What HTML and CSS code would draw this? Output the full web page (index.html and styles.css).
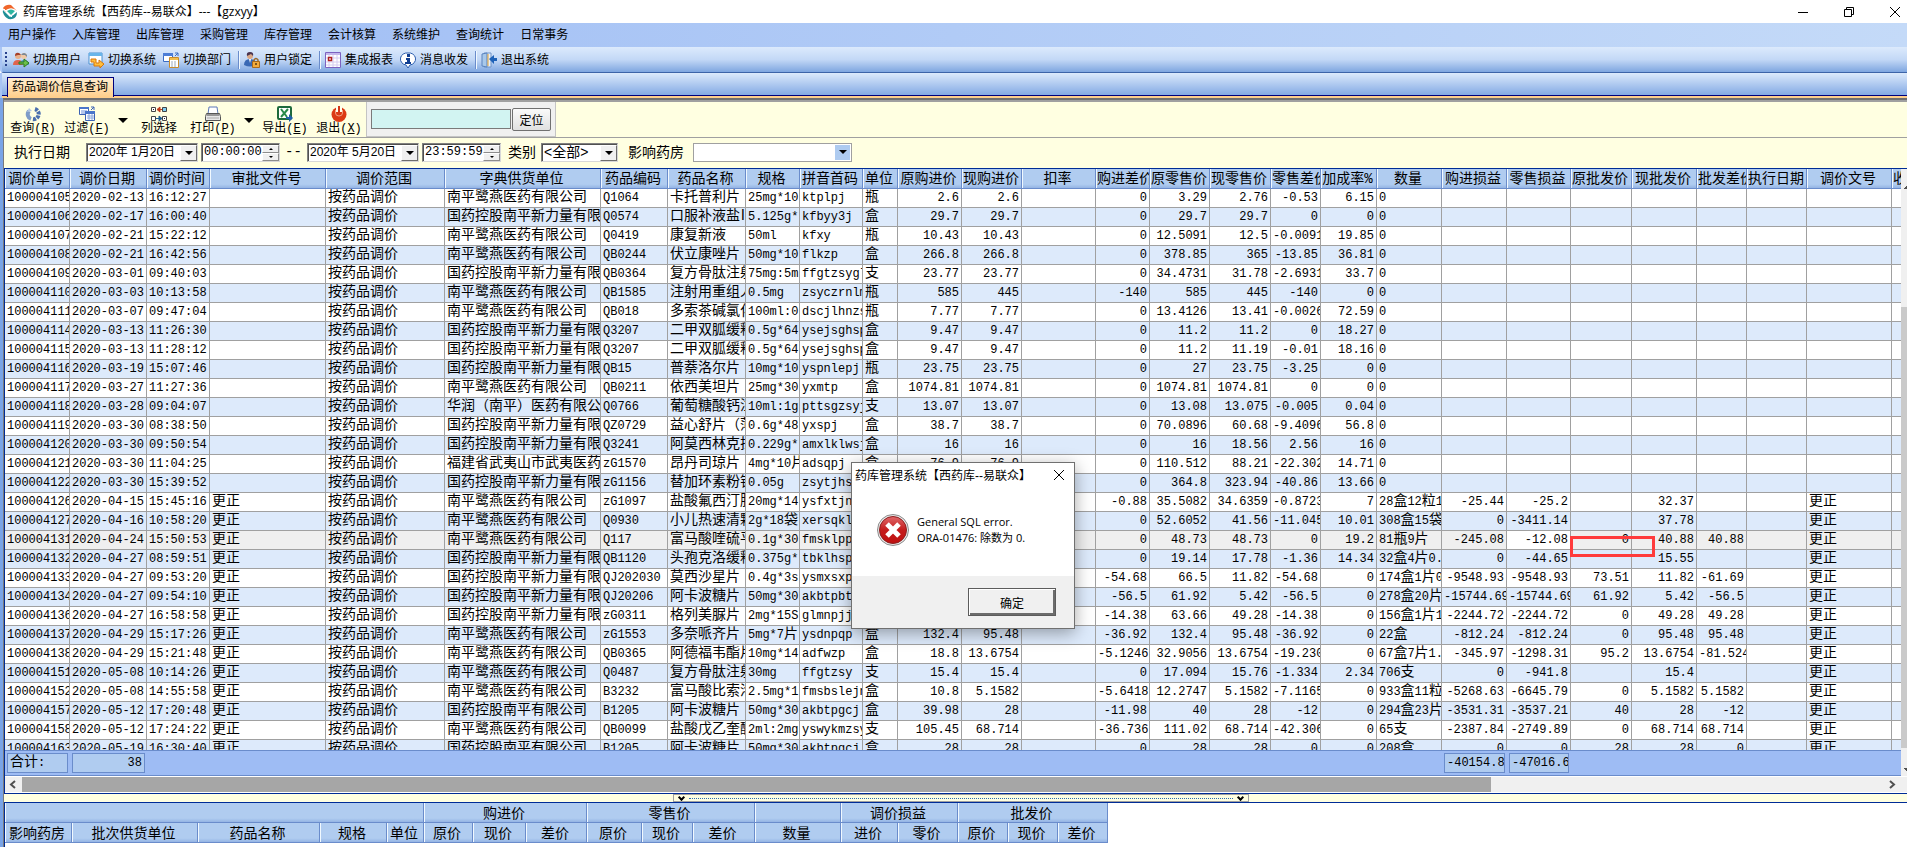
FILE: index.html
```html
<!DOCTYPE html>
<html lang="zh-CN">
<head>
    <meta charset="UTF-8">
    <meta name="viewport" content="width=device-width, initial-scale=1.0">
    <title>药库管理系统</title>
    <link rel="stylesheet" href="styles.css">
</head>
<body>
    <header class="title-bar">
        <svg class="app-icon" width="16" height="16" viewBox="0 0 16 16">
            <path d="M1 4 Q4 0 9 1 L15 7 Q11 3 6 5 Q3 6 4 8 Z" fill="#f0662b"/>
            <path d="M1 6 L8 13 Q12 11 15 8 Q15 14 10 15 Q5 16 2 11 Q0 8 1 6 Z" fill="#1f8f96"/>
            <path d="M5 7 Q9 4 13 7 L9 11 Z" fill="#2cb5a0"/>
            <path d="M2 5 L10 13" stroke="#fff" stroke-width="1"/>
        </svg>
        <span class="title-text">药库管理系统【西药库--易联众】---【gzxyy】</span>
        <div class="window-buttons">
            <button type="button" aria-label="最小化"><svg width="12" height="12" viewBox="0 0 12 12"><path d="M1 6.5h10" stroke="#000"/></svg></button>
            <button type="button" aria-label="还原"><svg width="12" height="12" viewBox="0 0 12 12" fill="none" stroke="#000"><path d="M1.5 3.5h7v7h-7z M3.500 3.500v-2h7v7h-2"/></svg></button>
            <button type="button" aria-label="关闭"><svg width="12" height="12" viewBox="0 0 12 12"><path d="M1 1L11 11M11 1L1 11" stroke="#000"/></svg></button>
        </div>
    </header>

    <nav class="menu-bar">
        <a href="#">用户操作</a>
        <a href="#">入库管理</a>
        <a href="#">出库管理</a>
        <a href="#">采购管理</a>
        <a href="#">库存管理</a>
        <a href="#">会计核算</a>
        <a href="#">系统维护</a>
        <a href="#">查询统计</a>
        <a href="#">日常事务</a>
    </nav>

    <div class="main-toolbar">
        <span class="grip"></span>
        <button type="button">
            <svg width="16" height="16" viewBox="0 0 16 16">
                <circle cx="5" cy="4" r="3" fill="#e8b08a"/><path d="M2 4q0-4 4-3l2 2-3 0z" fill="#a3402a"/>
                <circle cx="11" cy="4" r="3" fill="#f0c8a4"/><path d="M8 3q3-4 6 0v2l-2-2z" fill="#7a8896"/>
                <path d="M0 13q0-5 5-5t5 5z" fill="#e0644c"/><path d="M7 12q0-4 4-4 5 0 5 5z" fill="#4f9dc4"/>
                <path d="M6 10h5V7l5 4-5 4v-3H6z" fill="#6cc04a" stroke="#2c7a1e"/>
            </svg>切换用户</button>
        <button type="button">
            <svg width="16" height="16" viewBox="0 0 16 16">
                <path d="M1 1h13v11H1z" fill="#fff" stroke="#4a90d0"/><path d="M1 1h13v3H1z" fill="#69b5ea"/>
                <path d="M3 7h5v4h3V8l5 4-4 4v-2H6V10H3z" fill="#ffbe3c" stroke="#d8760e"/>
            </svg>切换系统</button>
        <button type="button">
            <svg width="16" height="16" viewBox="0 0 16 16">
                <path d="M.5 1.500h9v8h-9z" fill="#fff" stroke="#3b6cc4"/><path d="M0 1h10v3H0z" fill="#4c7dd6"/>
                <path d="M12 1h3v3M12 4l3-3" stroke="#3b6cc4" fill="none"/>
                <path d="M6.500 5.500h9v10h-9z" fill="#fff" stroke="#c88b2c"/><path d="M7 6h8v2H7z" fill="#f2bf4e"/>
                <path d="M8 10h6M8 12h6M8 14h6" stroke="#9aa8bc" stroke-dasharray="2 1"/>
            </svg>切换部门</button>
        <span class="split"></span>
        <button type="button">
            <svg width="16" height="16" viewBox="0 0 16 16">
                <circle cx="6" cy="4" r="3" fill="#dba987"/><path d="M3 4q-1-4 3-4 4 0 3 4L7 2z" fill="#4a3550"/>
                <path d="M0 13q0-6 6-6t6 6q-6 3-12 0z" fill="#3968b4"/><path d="M5 7l1 4 1-4z" fill="#fff"/>
                <path d="M10 10V8q2-3 4 0v2" fill="none" stroke="#9a6a2c" stroke-width="1.500"/>
                <path d="M8.500 9.500h7v6h-7z" fill="#f4ab3c" stroke="#a8691c"/><circle cx="12" cy="12" r="1" fill="#5b3a10"/>
            </svg>用户锁定</button>
        <span class="split"></span>
        <button type="button">
            <svg width="16" height="16" viewBox="0 0 16 16">
                <path d="M.5.500h15v15H.5z" fill="#fff" stroke="#7c62c0"/><path d="M1 1h14v2H1z" fill="#c4b8ec"/>
                <path d="M4 3v12M8 3v12M12 3v12M1 6h14M1 10h14M1 13h14" stroke="#d4ccf0"/>
                <path d="M3.500 5.500h3v3h-3z" fill="#fff" stroke="#b02020" stroke-width="1.500"/>
            </svg>集成报表</button>
        <button type="button">
            <svg width="16" height="16" viewBox="0 0 16 16">
                <path d="M8 1a6.500 6 0 0 1 2 12l-2 3-2-3A6.500 6 0 0 1 8 1z" fill="#fff" stroke="#2a5cae"/>
                <path d="M7 2h3v3H7zM6 6h4v4h1v2H5v-2h2V8H6z" fill="#123f92"/>
            </svg>消息收发</button>
        <span class="split"></span>
        <button type="button">
            <svg width="16" height="16" viewBox="0 0 16 16">
                <path d="M3 1h7v14H3z" fill="#e8f0fa" stroke="#6c92c8"/><path d="M1 2l5-1v14l-5-1z" fill="#a8c8ea" stroke="#5b83bd"/>
                <path d="M7 2v12" stroke="#e0a030"/><path d="M8 7l5-4v3h3v3h-3v3z" fill="#1e62b8"/>
            </svg>退出系统</button>
    </div>

    <div class="tab-strip">
        <a class="tab" href="#">药品调价信息查询</a>
    </div>

    <main class="workspace">
        <div class="action-bar">
            <button type="button" class="action">
                <svg width="16" height="16" viewBox="0 0 16 16" fill="none" stroke-width="4">
                    <path d="M6 13A5 5 0 0 1 4 5" stroke="#7f9cc8"/><path d="M10 3a5 5 0 0 1-3 10" stroke="#4a6fae" stroke-dasharray="3 1"/><path d="M2 6l2-4 3 3z" fill="#b4c8e4" stroke="none"/>
                </svg>
                <span>查询(<u>R</u>)</span></button>
            <button type="button" class="action">
                <svg width="16" height="16" viewBox="0 0 16 16">
                    <path d="M.5 1.500h9v7h-9z" fill="#fff" stroke="#3b62b4"/><path d="M0 1h10v2H0z" fill="#4a76ca"/><path d="M2 5h6M2 7h6" stroke="#6b90d8"/>
                    <path d="M12 1h3v3M12 4l3-3" stroke="#3b62b4" fill="none"/>
                    <path d="M6.500 5.500h9v9h-9z" fill="#fff" stroke="#3b62b4"/><path d="M6 5h10v3H6z" fill="#4a76ca"/><path d="M8 10h7M8 12h7M10 8v6M13 8v6" stroke="#8aa8de"/>
                </svg>
                <span>过滤(<u>F</u>)</span></button>
            <button type="button" class="drop" aria-label="过滤选项"></button>
            <button type="button" class="action">
                <svg width="16" height="16" viewBox="0 0 16 16" fill="#fff">
                    <path d="M.5 1.500h4v4h-4zM.5 10.500h4v4h-4zM11.500 10.500h4v4h-4z" stroke="#444"/><path d="M11.500 1.500h4v4h-4z" fill="#7fd0f4" stroke="#444"/>
                    <path d="M11 3.500H7M9 1L6 3.500 9 6z" stroke="#c03c1c" fill="#c03c1c"/><path d="M5 12.500h4M8 10l3 2.500L8 15z" stroke="#1c5c90" fill="#1c5c90"/>
                    <path d="M2 3h1v1H2zM13 12h1v1h-1z" fill="#222"/>
                </svg>
                <span>列选择</span></button>
            <button type="button" class="action">
                <svg width="16" height="16" viewBox="0 0 16 16">
                    <path d="M4 1h8l1 7H3z" fill="#fff" stroke="#5c78b8"/><path d="M1.500 7.500h13l1 3v4H.5v-4z" fill="#e8e8e8" stroke="#555"/>
                    <path d="M2 9h12" stroke="#444"/><path d="M2 12h12" stroke="#aaa"/>
                </svg>
                <span>打印(<u>P</u>)</span></button>
            <button type="button" class="drop" aria-label="打印选项"></button>
            <button type="button" class="action">
                <svg width="16" height="16" viewBox="0 0 16 16">
                    <rect x="1" y="1" width="13" height="12" rx="1" fill="#fff" stroke="#1e6a3c" stroke-width="2"/>
                    <path d="M4 3l6 8M11 3l-7 8" stroke="#2a8a4a" stroke-width="2"/><path d="M9 11h3V8l4 4-4 4v-3H9z" fill="#1f5fa8"/>
                </svg>
                <span>导出(<u>E</u>)</span></button>
            <button type="button" class="action">
                <svg width="16" height="16" viewBox="0 0 16 16">
                    <circle cx="8" cy="8.500" r="7.500" fill="#dc3a14"/><path d="M5 0h6v6H5z" fill="#ffe"/><path d="M4.500 4v3q0 3 3.500 3t3.500-3V4" fill="none" stroke="#f0a080" stroke-width="1"/><path d="M7 0h2v7H7z" fill="#d43818"/>
                </svg>
                <span>退出(<u>X</u>)</span></button>
            <div class="locate">
                <input type="text" class="locate-input" aria-label="定位内容">
                <button type="button" class="locate-button">定位</button>
            </div>
        </div>

        <div class="filter-bar">
            <label class="filter-label" for="date-from">执行日期</label>
            <div class="box date-box"><input type="text" id="date-from" value="2020年 1月20日"><button type="button" class="box-arrow" aria-label="选择日期"></button></div>
            <div class="box time-box"><input type="text" value="00:00:00" aria-label="开始时间"><span class="spin"><button type="button" aria-label="加"></button><button type="button" aria-label="减"></button></span></div>
            <span class="dash">--</span>
            <div class="box date-box"><input type="text" value="2020年 5月20日" aria-label="结束日期"><button type="button" class="box-arrow" aria-label="选择日期"></button></div>
            <div class="box time-box"><input type="text" value="23:59:59" aria-label="结束时间"><span class="spin"><button type="button" aria-label="加"></button><button type="button" aria-label="减"></button></span></div>
            <label class="filter-label" for="kind">类别</label>
            <div class="box kind-box"><select id="kind"><option>&lt;全部&gt;</option></select><span class="box-arrow"></span></div>
            <label class="filter-label" for="pharmacy">影响药房</label>
            <div class="box pharmacy-box"><select id="pharmacy"><option></option></select><span class="box-arrow"></span></div>
        </div>

        <div class="grid-frame">
            <div class="grid-body">
                <div class="grid-main">
                    <div class="grid-rows">
                        <table class="grid" id="price-grid"></table>
                    </div>
                    <table class="grid sum-grid" id="sum-grid"></table>
                </div>
                <div class="v-scroll"><span class="arrow-up"></span><div class="v-thumb"></div><span class="arrow-down"></span></div>
            </div>
            <div class="h-scroll">
                <svg width="17" height="15" viewBox="0 0 17 15"><path d="M10 4L6 7.500 10 11" fill="none" stroke="#505050" stroke-width="2"/></svg>
                <div class="h-track"><div class="h-thumb"></div></div>
                <svg width="30" height="15" viewBox="0 0 30 15"><path d="M13 4l4 3.500L13 11" fill="none" stroke="#505050" stroke-width="2"/></svg>
            </div>
            <div class="red-mark"></div>
        </div>

        <div class="splitter">
            <button type="button" class="splitter-handle" aria-label="折叠"><span class="chevron"></span><span class="dots"></span><span class="chevron"></span></button>
        </div>

        <div class="detail">
            <table class="detail-grid">
                <colgroup>
                    <col class="w67"><col class="w126"><col class="w122"><col class="w67"><col class="w37">
                    <col class="w49"><col class="w53"><col class="w61">
                    <col class="w55"><col class="w51"><col class="w62">
                    <col class="w86">
                    <col class="w57"><col class="w60">
                    <col class="w50"><col class="w50"><col class="w50">
                </colgroup>
                <thead>
                    <tr><th colspan="5"></th><th colspan="3">购进价</th><th colspan="3">零售价</th><th></th><th colspan="2">调价损益</th><th colspan="3">批发价</th></tr>
                    <tr><th>影响药房</th><th>批次供货单位</th><th>药品名称</th><th>规格</th><th>单位</th><th>原价</th><th>现价</th><th>差价</th><th>原价</th><th>现价</th><th>差价</th><th>数量</th><th>进价</th><th>零价</th><th>原价</th><th>现价</th><th>差价</th></tr>
                </thead>
            </table>
        </div>
    </main>

    <div class="dialog" role="alertdialog" aria-labelledby="dialog-title">
        <div class="dialog-title">
            <span id="dialog-title">药库管理系统【西药库--易联众】</span>
            <button type="button" class="dialog-close" aria-label="关闭"><svg width="12" height="12" viewBox="0 0 12 12"><path d="M1 1L11 11M11 1L1 11" stroke="#000"/></svg></button>
        </div>
        <div class="dialog-body">
            <svg width="32" height="32" viewBox="0 0 32 32">
                <defs><linearGradient id="red" x1="0" y1="0" x2="0" y2="1"><stop offset="0" stop-color="#e0686a"/><stop offset=".5" stop-color="#c41c1c"/><stop offset="1" stop-color="#c01010"/></linearGradient></defs>
                <circle cx="16" cy="16" r="15.500" fill="#e8e8e8" stroke="#8c8c8c"/>
                <circle cx="16" cy="16" r="13.500" fill="url(#red)" stroke="#8c2020"/>
                <path d="M10 10l12 12M22 10L10 22" stroke="#fff" stroke-width="5"/>
            </svg>
            <p>General SQL error.<br>ORA-01476: 除数为 0.</p>
        </div>
        <div class="dialog-foot"><button type="button" class="ok-button">确定</button></div>
    </div>

    <script>
const NP = '南平鹭燕医药有限公司';
const GY = '国药控股南平新力量有限公司';
const GN = '国药控股南平有限公司';

// title, column width, right aligned
const columns = [
    ['调价单号', 65], ['调价日期', 77], ['调价时间', 63], ['审批文件号', 116], ['调价范围', 119],
    ['字典供货单位', 156], ['药品编码', 67], ['药品名称', 78], ['规格', 54], ['拼音首码', 63], ['单位', 35],
    ['原购进价', 64, true], ['现购进价', 60, true], ['扣率', 74, true], ['购进差价', 54, true],
    ['原零售价', 60, true], ['现零售价', 61, true], ['零售差价', 50, true], ['加成率%', 56, true],
    ['数量', 65], ['购进损益', 65, true], ['零售损益', 64, true], ['原批发价', 61, true],
    ['现批发价', 65, true], ['批发差价', 50, true], ['执行日期', 60], ['调价文号', 85], ['收', 0]
];

// id, date, time, note, supplier, code, name, spec, pinyin, unit, then the figures
const rows = [
    ['100004105', '2020-02-13', '16:12:27', '', NP, 'Q1064', '卡托普利片', '25mg*10', 'ktplpj', '瓶', '2.6', '2.6', '0', '3.29', '2.76', '-0.53', '6.15', '0'],
    ['100004106', '2020-02-17', '16:00:40', '', GY, 'Q0574', '口服补液盐Ⅲ', '5.125g*', 'kfbyy3j', '盒', '29.7', '29.7', '0', '29.7', '29.7', '0', '0', '0'],
    ['100004107', '2020-02-21', '15:22:12', '', NP, 'Q0419', '康复新液', '50ml', 'kfxy', '瓶', '10.43', '10.43', '0', '12.5091', '12.5', '-0.0091', '19.85', '0'],
    ['100004108', '2020-02-21', '16:42:56', '', NP, 'QB0244', '伏立康唑片', '50mg*10', 'flkzp', '盒', '266.8', '266.8', '0', '378.85', '365', '-13.85', '36.81', '0'],
    ['100004109', '2020-03-01', '09:40:03', '', GY, 'QB0364', '复方骨肽注射', '75mg:5m', 'ffgtzsygl', '支', '23.77', '23.77', '0', '34.4731', '31.78', '-2.6931', '33.7', '0'],
    ['100004110', '2020-03-03', '10:13:58', '', NP, 'QB1585', '注射用重组人', '0.5mg', 'zsyczrnlm', '瓶', '585', '445', '-140', '585', '445', '-140', '0', '0'],
    ['100004111', '2020-03-07', '09:47:04', '', NP, 'QB018', '多索茶碱氯化', '100ml:0', 'dscjlhnzs', '瓶', '7.77', '7.77', '0', '13.4126', '13.41', '-0.0026', '72.59', '0'],
    ['100004114', '2020-03-13', '11:26:30', '', GY, 'Q3207', '二甲双胍缓释', '0.5g*64', 'ysejsghsp', '盒', '9.47', '9.47', '0', '11.2', '11.2', '0', '18.27', '0'],
    ['100004115', '2020-03-13', '11:28:12', '', GY, 'Q3207', '二甲双胍缓释', '0.5g*64', 'ysejsghsp', '盒', '9.47', '9.47', '0', '11.2', '11.19', '-0.01', '18.16', '0'],
    ['100004116', '2020-03-19', '15:07:46', '', GY, 'QB15', '普萘洛尔片', '10mg*10', 'yspnlepj', '瓶', '23.75', '23.75', '0', '27', '23.75', '-3.25', '0', '0'],
    ['100004117', '2020-03-27', '11:27:36', '', NP, 'QB0211', '依西美坦片', '25mg*30', 'yxmtp', '盒', '1074.81', '1074.81', '0', '1074.81', '1074.81', '0', '0', '0'],
    ['100004118', '2020-03-28', '09:04:07', '', '华润（南平）医药有限公司', 'Q0766', '葡萄糖酸钙注', '10ml:1g', 'pttsgzsyj', '支', '13.07', '13.07', '0', '13.08', '13.075', '-0.005', '0.04', '0'],
    ['100004119', '2020-03-30', '08:38:50', '', GY, 'QZ0729', '益心舒片（薄', '0.6g*48', 'yxspj', '盒', '38.7', '38.7', '0', '70.0896', '60.68', '-9.4096', '56.8', '0'],
    ['100004120', '2020-03-30', '09:50:54', '', GY, 'Q3241', '阿莫西林克拉', '0.229g*', 'amxlklwsj', '盒', '16', '16', '0', '16', '18.56', '2.56', '16', '0'],
    ['100004121', '2020-03-30', '11:04:25', '', '福建省武夷山市武夷医药', 'zG1570', '昂丹司琼片', '4mg*10片', 'adsqpj', '盒', '76.9', '76.9', '0', '110.512', '88.21', '-22.302', '14.71', '0'],
    ['100004122', '2020-03-30', '15:39:52', '', GY, 'zG1156', '替加环素粉针', '0.05g', 'zsytjhsf', '瓶', '284', '284', '0', '364.8', '323.94', '-40.86', '13.66', '0'],
    ['100004126', '2020-04-15', '15:45:16', '更正', NP, 'zG1097', '盐酸氟西汀胶', '20mg*14', 'ysfxtjn', '盒', '33.25', '32.37', '-0.88', '35.5082', '34.6359', '-0.8723', '7', '28盒12粒1', '-25.44', '-25.2', '', '32.37', ''],
    ['100004127', '2020-04-16', '10:58:20', '更正', NP, 'Q0930', '小儿热速清颗', '2g*18袋', 'xersqkl', '盒', '37.78', '37.78', '0', '52.6052', '41.56', '-11.045', '10.01', '308盒15袋', '0', '-3411.14', '', '37.78', ''],
    ['100004131', '2020-04-24', '15:50:53', '更正', NP, 'Q117', '富马酸喹硫平', '0.1g*30', 'fmsklpp', '瓶', '40.88', '40.88', '0', '48.73', '48.73', '0', '19.2', '81瓶9片', '-245.08', '-12.08', '0', '40.88', '40.88'],
    ['100004132', '2020-04-27', '08:59:51', '更正', GY, 'QB1120', '头孢克洛缓释', '0.375g*', 'tbklhsp', '盒', '15.55', '15.55', '0', '19.14', '17.78', '-1.36', '14.34', '32盒4片0.', '0', '-44.65', '', '15.55', ''],
    ['100004133', '2020-04-27', '09:53:20', '更正', GY, 'QJ202030', '莫西沙星片', '0.4g*3s', 'ysmxsxp', '盒', '66.5', '11.82', '-54.68', '66.5', '11.82', '-54.68', '0', '174盒1片0', '-9548.93', '-9548.93', '73.51', '11.82', '-61.69'],
    ['100004134', '2020-04-27', '09:54:10', '更正', GY, 'QJ20206', '阿卡波糖片', '50mg*30', 'akbtpbtp', '盒', '61.92', '5.42', '-56.5', '61.92', '5.42', '-56.5', '0', '278盒20片', '-15744.69', '-15744.69', '61.92', '5.42', '-56.5'],
    ['100004136', '2020-04-27', '16:58:58', '更正', GY, 'zG0311', '格列美脲片', '2mg*15S', 'glmnpjj', '盒', '63.66', '49.28', '-14.38', '63.66', '49.28', '-14.38', '0', '156盒1片1', '-2244.72', '-2244.72', '0', '49.28', '49.28'],
    ['100004137', '2020-04-29', '15:17:26', '更正', NP, 'zG1553', '多奈哌齐片', '5mg*7片', 'ysdnpqp', '盒', '132.4', '95.48', '-36.92', '132.4', '95.48', '-36.92', '0', '22盒', '-812.24', '-812.24', '0', '95.48', '95.48'],
    ['100004138', '2020-04-29', '15:21:48', '更正', NP, 'QB0365', '阿德福韦酯片', '10mg*14', 'adfwzp', '盒', '18.8', '13.6754', '-5.1246', '32.9056', '13.6754', '-19.230', '0', '67盒7片1.', '-345.97', '-1298.31', '95.2', '13.6754', '-81.524'],
    ['100004151', '2020-05-08', '10:14:26', '更正', NP, 'Q0487', '复方骨肽注射', '30mg', 'ffgtzsy', '支', '15.4', '15.4', '0', '17.094', '15.76', '-1.334', '2.34', '706支', '0', '-941.8', '', '15.4', ''],
    ['100004152', '2020-05-08', '14:55:58', '更正', NP, 'B3232', '富马酸比索洛', '2.5mg*1', 'fmsbslejn', '盒', '10.8', '5.1582', '-5.6418', '12.2747', '5.1582', '-7.1165', '0', '933盒11粒', '-5268.63', '-6645.79', '0', '5.1582', '5.1582'],
    ['100004157', '2020-05-12', '17:20:48', '更正', GN, 'B1205', '阿卡波糖片', '50mg*30', 'akbtpgcj', '盒', '39.98', '28', '-11.98', '40', '28', '-12', '0', '294盒23片', '-3531.31', '-3537.21', '40', '28', '-12'],
    ['100004158', '2020-05-12', '17:24:22', '更正', NP, 'QB0099', '盐酸戊乙奎醚', '2ml:2mg', 'yswykmzsy', '支', '105.45', '68.714', '-36.736', '111.02', '68.714', '-42.306', '0', '65支', '-2387.84', '-2749.89', '0', '68.714', '68.714'],
    ['100004163', '2020-05-19', '16:30:40', '更正', GN, 'B1205', '阿卡波糖片', '50mg*30', 'akbtpgcj', '盒', '28', '28', '0', '28', '28', '0', '0', '208盒', '0', '0', '28', '28', '0']
];

const selectedId = '100004131';
const focusedColumn = 21;

// Chinese runs use a larger size than the half-width characters
function format(text) {
    return text.replace(/[^\x00-\xff]+/g, '<span class="zh">$&</span>');
}

function colgroup() {
    return '<colgroup>' + columns.map(c => c[1] ? `<col style="width:${c[1]}px">` : '<col>').join('') + '</colgroup>';
}

function rowHtml(row) {
    const cells = [...row.slice(0, 4), '按药品调价', ...row.slice(4, 12), '', ...row.slice(12, 18)];
    for (let i = 18; i < 23; i++) {
        cells.push(row[i] || '');
    }
    cells.push('', row[3], '');

    const selected = row[0] === selectedId;
    const tds = cells.map((text, i) => {
        const names = [];
        if (columns[i][2]) names.push('num');
        if (selected && i === focusedColumn) names.push('focused');
        return `<td class="${names.join(' ')}">${format(text)}</td>`;
    });
    return `<tr class="${selected ? 'selected' : ''}">${tds.join('')}</tr>`;
}

const sums = { 0: '合计:', 1: '38', 20: '-40154.8', 21: '-47016.6' };

document.getElementById('price-grid').innerHTML = colgroup() +
    '<thead><tr>' + columns.map(c => `<th>${c[0]}</th>`).join('') + '</tr></thead>' +
    '<tbody>' + rows.map(rowHtml).join('') + '</tbody>';

document.getElementById('sum-grid').innerHTML = colgroup() +
    '<tbody><tr>' + columns.map((c, i) => sums[i]
        ? `<td><div class="sum-box ${i > 0 ? 'num' : ''}">${format(sums[i])}</div></td>`
        : '<td></td>').join('') + '</tr></tbody>';
    </script>
</body>
</html>
```
FILE: styles.css
```css
* {
    box-sizing: border-box;
}

body {
    margin: 0;
    height: 100vh;
    display: flex;
    flex-direction: column;
    overflow: hidden;
    background-color: #fff;
    color: #000;
    font-family: "Liberation Sans", "Noto Sans CJK SC", sans-serif;
    font-size: 12px;
}

button, input, select {
    font: inherit;
    color: inherit;
    margin: 0;
    padding: 0;
    border: none;
    border-radius: 0;
    background: none;
}

svg {
    flex: none;
    display: block;
}

/* title bar */
.title-bar {
    display: flex;
    align-items: center;
    height: 23px;
    padding-left: 2px;
    background-color: #fff;
    flex: none;
}

.title-text {
    margin-left: 5px;
    font-family: "Open Sans", "Noto Sans CJK SC", sans-serif;
    line-height: 22px;
    white-space: nowrap;
}

.window-buttons {
    display: flex;
    margin-left: auto;
}

.window-buttons button {
    width: 46px;
    height: 22px;
    display: flex;
    align-items: center;
    justify-content: center;
}

.window-buttons button:last-child {
    width: 35px;
    padding-right: 6px;
    justify-content: flex-end;
}

/* menu */
.menu-bar {
    display: flex;
    gap: 16px;
    height: 24px;
    padding: 1px 0 0 8px;
    flex: none;
    background: linear-gradient(to right, #9ebcf4, #c4daf8);
}

.menu-bar a {
    color: #000;
    text-decoration: none;
    line-height: 23px;
    white-space: nowrap;
}

.main-toolbar {
    display: flex;
    align-items: center;
    height: 26px;
    padding-left: 5px;
    flex: none;
    background: linear-gradient(#dceafc, #c3d8f6 50%, #7ea6e0);
    border-left: 2px solid #a8c4f4;
    border-bottom: 1px solid #3c64a8;
    border-bottom-left-radius: 4px;
}

.main-toolbar button {
    display: flex;
    align-items: center;
    gap: 4px;
    margin-right: 7px;
    line-height: 20px;
    white-space: nowrap;
}

.grip {
    width: 2px;
    height: 16px;
    margin-right: 6px;
    margin-left: -2px;
    background: repeating-linear-gradient(#27418c 0 2px, transparent 2px 4px);
}

.split {
    width: 2px;
    height: 18px;
    margin-right: 4px;
    border-left: 1px solid #6a8ccb;
    border-right: 1px solid #f1f9ff;
}

/* tabs */
.tab-strip {
    height: 25px;
    padding: 4px 0 0 5px;
    flex: none;
    display: flex;
    border-left: 2px solid #a8c4f4;
    background: linear-gradient(#dceafc, #84aae4 22px, #00007c 22px 23px, #ffcf8c 23px);
}

.tab {
    height: 20px;
    padding: 0 5px 0 4px;
    border: 1px solid #00007c;
    border-bottom: none;
    background: linear-gradient(#ffeed0, #ffcf8c);
    color: #000;
    line-height: 18px;
    text-decoration: none;
}

.workspace {
    flex: 1;
    min-height: 0;
    display: flex;
    flex-direction: column;
    margin-left: 3px;
    border-left: 1px solid #7a7a7a;
    border-top: 2px solid #6f6f6f;
    background-color: #ffffe1;
    box-shadow: -3px 0 0 #7aa4e6;
}

/* actions */
.action-bar {
    display: flex;
    height: 38px;
    flex: none;
    padding-left: 2px;
    border-top: 2px solid #a0a0a0;
    border-bottom: 1px solid #a0a0a0;
}

.action {
    display: flex;
    flex-direction: column;
    align-items: center;
    width: 54px;
    padding-top: 4px;
    font-family: "Liberation Mono", "Noto Sans CJK SC", monospace;
    font-size: 12px;
    line-height: 15px;
    white-space: nowrap;
}

.drop {
    width: 18px;
    display: flex;
    justify-content: center;
    padding-top: 16px;
}

.drop::before {
    content: "";
    border: 5px solid transparent;
    border-top-color: #000;
    border-bottom: none;
}

.locate {
    display: flex;
    align-items: center;
    gap: 1px;
    width: 190px;
    padding: 2px 4px;
    background-color: #f0f0f0;
    border: 1px solid #c4c4c4;
    border-top: none;
}

.locate-input {
    flex: 1;
    min-width: 0;
    height: 20px;
    background-color: #d2f4f2;
    border: 1px solid #7a7a7a;
}

.locate-button {
    width: 39px;
    height: 23px;
    background: linear-gradient(#fafafa, #e0e0e0);
    border: 1px solid #707070;
    border-radius: 2px;
}

/* filters */
.filter-bar {
    display: flex;
    align-items: center;
    height: 30px;
    padding: 0 0 2px 10px;
    flex: none;
}

.filter-label {
    font-size: 14px;
    line-height: 20px;
    white-space: nowrap;
}

.box {
    display: flex;
    height: 19px;
    background-color: #fff;
    border: 1px solid;
    border-color: #808080 #d8d8d8 #d8d8d8 #808080;
    box-shadow: inset 1px 1px 0 #505050;
}

.box input {
    flex: 1;
    min-width: 0;
    padding: 0 0 0 2px;
    font-size: 12px;
    line-height: 16px;
}

.box select {
    flex: 1;
    min-width: 0;
    padding-left: 2px;
    appearance: none;
    font-size: 14px;
    line-height: 17px;
}

.box-arrow {
    display: flex;
    align-items: center;
    justify-content: center;
    width: 17px;
    margin: 1px 0 0;
    background-color: #f0f0f0;
    border: 1px solid;
    border-color: #fff #6c6c6c #6c6c6c #fff;
}

.box-arrow::before {
    content: "";
    border: 4px solid transparent;
    border-top-color: #000;
    border-bottom: none;
}

.date-box {
    width: 112px;
}

.filter-label + .date-box {
    margin-left: 16px;
}

.time-box {
    width: 79px;
    margin-left: 3px;
}

.time-box input {
    font-family: "Liberation Mono", monospace;
}

.spin {
    display: flex;
    flex-direction: column;
    width: 17px;
    padding-top: 1px;
}

.spin button {
    flex: 1;
    display: flex;
    align-items: center;
    justify-content: center;
    background-color: #f0f0f0;
    border: 1px solid;
    border-color: #fff #8c8c8c #8c8c8c #fff;
}

.spin button::before {
    content: "";
    border: 2px solid transparent;
    border-bottom-color: #000;
    border-top: none;
}

.spin button:last-child::before {
    border: 2px solid transparent;
    border-top-color: #000;
    border-bottom: none;
}

.dash {
    width: 27px;
    text-align: center;
    font-family: "Liberation Mono", monospace;
    font-size: 14px;
}

.time-box + .filter-label {
    margin-left: 7px;
}

.kind-box {
    width: 77px;
    margin: 0 10px 0 5px;
}

.pharmacy-box {
    width: 159px;
    margin-left: 9px;
    border-color: #a0a0a0;
    box-shadow: none;
}

.pharmacy-box .box-arrow {
    margin: 1px;
    width: 15px;
    background-color: #aecbf0;
    border-color: #aecbf0;
}

/* grid */
.grid-frame {
    position: relative;
    flex: 1;
    min-height: 0;
    display: flex;
    flex-direction: column;
    border: 1px solid #002c96;
    border-right: none;
}

.grid-body {
    flex: 1;
    min-height: 0;
    display: flex;
}

.grid-main {
    flex: 1;
    min-width: 0;
    display: flex;
    flex-direction: column;
}

.grid-rows {
    flex: 1;
    min-height: 0;
    overflow: hidden;
}

.grid {
    width: 100%;
    table-layout: fixed;
    border-collapse: separate;
    border-spacing: 0;
    background-color: #fff;
    font-family: "Liberation Mono", "Noto Sans CJK SC", monospace;
    font-size: 12px;
}

.zh {
    font-size: 14px;
    line-height: 14px;
}

.grid th, .detail-grid th {
    height: 20px;
    padding: 0 3px 0 1px;
    overflow: hidden;
    background: linear-gradient(#b0ccf0 80%, #94b4e4);
    border-right: 1px solid #6a8ccb;
    border-bottom: 1px solid #6a8ccb;
    box-shadow: inset 1px 0 0 #f1f9ff;
    font-size: 14px;
    font-weight: normal;
    line-height: 18px;
    white-space: nowrap;
}

.grid tbody td {
    height: 19px;
    padding: 0 2px;
    overflow: hidden;
    border-right: 1px solid #a0a0a0;
    border-bottom: 1px solid #a0a0a0;
    line-height: 18px;
    white-space: nowrap;
}

.grid tr > :last-child {
    border-right: none;
}

.grid tbody tr:nth-child(even) {
    background-color: #ddeafb;
}

.grid tbody tr.selected {
    background-color: #efefef;
}

.grid .focused {
    background-color: #fff;
}

.grid .num {
    text-align: right;
}

.sum-grid {
    flex: none;
    background-color: #9ebcf4;
    border-top: 1px solid #6a8ccb;
    border-bottom: 1px solid #6a8ccb;
}

.sum-grid tbody td {
    height: 24px;
    border: none;
}

.sum-box {
    height: 20px;
    padding: 0 2px;
    overflow: hidden;
    background-color: #b0ccf0;
    border: 1px solid #6a8ccb;
}

.v-scroll {
    width: 6px;
    display: flex;
    flex-direction: column;
    align-items: flex-end;
    padding: 16px 0 4px;
    background-color: #f0f0f0;
    overflow: hidden;
}

.v-thumb {
    width: 100%;
    flex: 1;
    margin: 118px 0 20px;
    background-color: #cacaca;
}

.arrow-up, .arrow-down {
    width: 3px;
    height: 4px;
    background: linear-gradient(to bottom right, transparent 50%, #505050 50%);
}

.arrow-down {
    background: linear-gradient(to top right, transparent 50%, #505050 50%);
}

.h-scroll {
    display: flex;
    align-items: center;
    height: 17px;
    flex: none;
    background-color: #f0f0f0;
    border-top: 1px solid #fff;
    border-bottom: 1px solid #fff;
}

.h-track {
    flex: 1;
    height: 15px;
}

.h-thumb {
    width: 79.2%;
    height: 100%;
    background-color: #a6a6a6;
}

.red-mark {
    position: absolute;
    left: 1565px;
    top: 367px;
    width: 85px;
    height: 21px;
    border: 3px solid #ff3b3b;
}

.splitter {
    display: flex;
    justify-content: center;
    height: 8px;
    padding-left: 11px;
    flex: none;
}

.splitter-handle {
    display: flex;
    align-items: center;
    width: 576px;
    gap: 5px;
    padding: 0 5px;
    border: 1px solid #a0a0a0;
}

.dots {
    flex: 1;
    border-top: 1px dotted #2c6cb4;
}

.chevron {
    width: 5px;
    height: 5px;
    border: solid #000;
    border-width: 0 2px 2px 0;
    transform: translateY(-1px) rotate(45deg);
}

.detail {
    height: 45px;
    flex: none;
    overflow: hidden;
    background-color: #fff;
    border-top: 1px solid #002c96;
    border-left: 1px solid #002c96;
}

.detail-grid {
    width: 1103px;
    table-layout: fixed;
    border-collapse: separate;
    border-spacing: 0;
}

.w37 { width: 37px; }
.w49 { width: 49px; }
.w50 { width: 50px; }
.w51 { width: 51px; }
.w53 { width: 53px; }
.w55 { width: 55px; }
.w57 { width: 57px; }
.w60 { width: 60px; }
.w61 { width: 61px; }
.w62 { width: 62px; }
.w67 { width: 67px; }
.w86 { width: 86px; }
.w122 { width: 122px; }
.w126 { width: 126px; }

/* error dialog */
.dialog {
    position: absolute;
    left: 851px;
    top: 462px;
    width: 224px;
    background-color: #fff;
    border: 1px solid #707070;
    box-shadow: 0 4px 16px rgba(0, 0, 0, 0.35);
}

.dialog-title {
    display: flex;
    align-items: center;
    justify-content: space-between;
    height: 25px;
    padding: 0 9px 2px 3px;
    white-space: nowrap;
}

.dialog-body {
    display: flex;
    align-items: center;
    gap: 8px;
    height: 88px;
    padding: 0 0 5px 25px;
    font-family: "Open Sans", "Noto Sans CJK SC", sans-serif;
    font-size: 11px;
}

.dialog-body p {
    margin: 0;
    line-height: 16px;
}

.dialog-foot {
    display: flex;
    justify-content: flex-end;
    padding: 12px 18px;
    background-color: #f0f0f0;
}

.ok-button {
    width: 88px;
    height: 28px;
    background-color: #f0f0f0;
    border: 1px solid #5c5c5c;
    box-shadow: inset 1px 1px 0 #fff, inset -2px -2px 0 #6c6c6c;
}
```
